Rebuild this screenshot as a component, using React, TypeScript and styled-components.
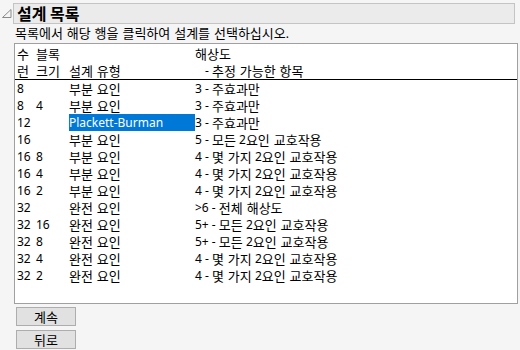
import React from "react";
import styled, { createGlobalStyle } from "styled-components";

const Global = createGlobalStyle`
  html, body { margin: 0; padding: 0; background: #f5f5f5; }
  body { font-family: "Noto Sans", "Noto Sans CJK KR", sans-serif; font-size: 12px; color: #000; }
`;

const Page = styled.div`
  width: 520px;
  height: 350px;
  box-sizing: border-box;
  padding-top: 3px;
  display: flex;
  flex-direction: column;
`;

const TitleRow = styled.div`
  display: flex;
  align-items: stretch;
  height: 21px;
`;

const Disclosure = styled.div`
  width: 13px;
  display: flex;
  align-items: center;
  padding-left: 2px;
  box-sizing: border-box;
`;

const TitleBar = styled.div`
  flex: 1;
  margin-right: 5px;
  background: #ebebeb;
  border: 1px solid #c4c4c4;
  display: flex;
  align-items: center;
  padding-left: 3px;
  font-family: "Noto Sans CJK KR", sans-serif;
  font-weight: 700;
  font-size: 16px;
  line-height: 19px;
`;

const Instruction = styled.div`
  height: 19px;
  line-height: 19px;
  padding-left: 15px;
  font-family: "Noto Sans", "Noto Sans CJK KR", sans-serif;
  font-size: 12px;
`;

const Hangul = styled.span`
  display: inline-block;
  height: 17px;
  line-height: 17px;
  vertical-align: top;
  overflow: visible;
  font-family: "Noto Sans CJK KR", sans-serif;
  font-size: 13px;
  word-spacing: 1px;
`;

const TableBox = styled.div`
  margin: 0 2px 0 14px;
  height: 261px;
  box-sizing: border-box;
  border: 1px solid #a0a0a0;
  background: #fff;
  display: flex;
  flex-direction: column;
`;

const Header = styled.div`
  padding-top: 1px;
  border-bottom: 1px solid #000;
`;

const Row = styled.div`
  display: flex;
  height: 17px;
  line-height: 17px;
  padding-left: 2px;
  white-space: nowrap;
`;

const Cell = styled.div<{ $w?: number; $sel?: boolean; $indent?: number }>`
  ${(p) => (p.$w ? `width: ${p.$w}px;` : "flex: 1;")}
  flex-shrink: 0;
  padding-left: ${(p) => p.$indent ?? 0}px;
  box-sizing: border-box;
  background: ${(p) => (p.$sel ? "#0078d7" : "transparent")};
  color: ${(p) => (p.$sel ? "#fff" : "#000")};
  font-family: "Noto Sans", "Noto Sans CJK KR", sans-serif;
`;

const Buttons = styled.div`
  display: flex;
  flex-direction: column;
  gap: 4px;
  margin: 3px 0 0 16px;
`;

const Button = styled.button`
  width: 60px;
  height: 19px;
  padding: 0;
  background: #e1e1e1;
  border: 1px solid #adadad;
  font-family: "Noto Sans CJK KR", sans-serif;
  font-size: 13px;
  line-height: 17px;
  color: #000;
`;

const HANGUL_RUN = /([\uAC00-\uD7A3\u3131-\u318E]+(?:\s+[\uAC00-\uD7A3\u3131-\u318E]+)*)/;

function T({ children }: { children: string }) {
  const parts = children.split(HANGUL_RUN);
  return (
    <>
      {parts.map((p, i) =>
        i % 2 === 1 ? <Hangul key={i}>{p}</Hangul> : p ? <React.Fragment key={i}>{p}</React.Fragment> : null
      )}
    </>
  );
}

const rows: [string, string, string, string][] = [
  ["8", "", "부분 요인", "3 - 주효과만"],
  ["8", "4", "부분 요인", "3 - 주효과만"],
  ["12", "", "Plackett-Burman", "3 - 주효과만"],
  ["16", "", "부분 요인", "5 - 모든 2요인 교호작용"],
  ["16", "8", "부분 요인", "4 - 몇 가지 2요인 교호작용"],
  ["16", "4", "부분 요인", "4 - 몇 가지 2요인 교호작용"],
  ["16", "2", "부분 요인", "4 - 몇 가지 2요인 교호작용"],
  ["32", "", "완전 요인", ">6 - 전체 해상도"],
  ["32", "16", "완전 요인", "5+ - 모든 2요인 교호작용"],
  ["32", "8", "완전 요인", "5+ - 모든 2요인 교호작용"],
  ["32", "4", "완전 요인", "4 - 몇 가지 2요인 교호작용"],
  ["32", "2", "완전 요인", "4 - 몇 가지 2요인 교호작용"],
];

const W = [19, 33, 126];

export default function App() {
  return (
    <>
      <Global />
      <Page>
        <TitleRow>
          <Disclosure>
            <svg width="10" height="9" viewBox="0 0 10 9">
              <path d="M9 0.5 L9 8.5 L0.5 8.5 Z" fill="none" stroke="#8a8a8a" strokeWidth="1" />
            </svg>
          </Disclosure>
          <TitleBar>설계 목록</TitleBar>
        </TitleRow>
        <Instruction>
          <T>목록에서 해당 행을 클릭하여 설계를 선택하십시오.</T>
        </Instruction>
        <TableBox>
          <Header>
            <Row>
              <Cell $w={W[0]}><T>수</T></Cell>
              <Cell $w={W[1]}><T>블록</T></Cell>
              <Cell $w={W[2]}></Cell>
              <Cell><T>해상도</T></Cell>
            </Row>
            <Row>
              <Cell $w={W[0]}><T>런</T></Cell>
              <Cell $w={W[1]}><T>크기</T></Cell>
              <Cell $w={W[2]}><T>설계 유형</T></Cell>
              <Cell $indent={10}><T>- 추정 가능한 항목</T></Cell>
            </Row>
          </Header>
          {rows.map((r, i) => (
            <Row key={i}>
              <Cell $w={W[0]}>{r[0]}</Cell>
              <Cell $w={W[1]}>{r[1]}</Cell>
              <Cell $w={W[2]} $sel={i === 2}><T>{r[2]}</T></Cell>
              <Cell><T>{r[3]}</T></Cell>
            </Row>
          ))}
        </TableBox>
        <Buttons>
          <Button>계속</Button>
          <Button>뒤로</Button>
        </Buttons>
      </Page>
    </>
  );
}
